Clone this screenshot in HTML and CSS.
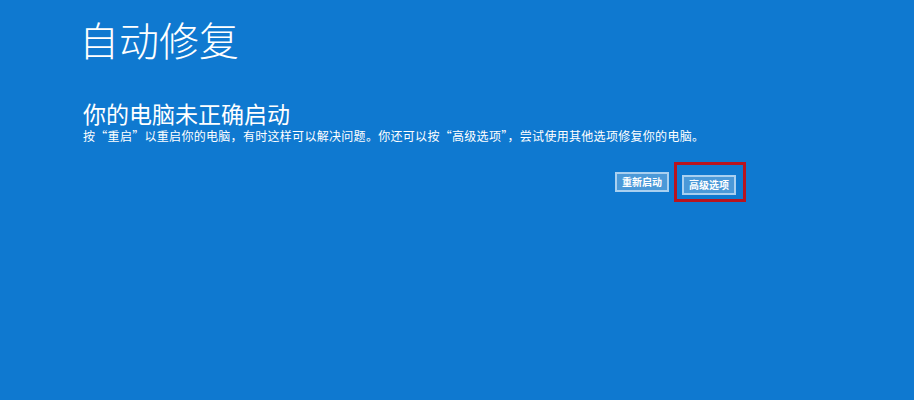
FILE: index.html
```html
<!DOCTYPE html>
<html lang="zh-CN">
<head>
<meta charset="utf-8">
<link rel="stylesheet" href="styles.css">
</head>
<body>
<div class="screen">
  <h1 class="title">自动修复</h1>
  <h2 class="subtitle">你的电脑未正确启动</h2>
  <p class="desc">按“重启”以重启你的电脑，有时这样可以解决问题。你还可以按“高级选项”，尝试使用其他选项修复你的电脑。</p>
  <div class="actions">
    <button class="btn">重新启动</button>
    <div class="highlight"><button class="btn">高级选项</button></div>
  </div>
</div>
</body>
</html>
```
FILE: styles.css
```css
html, body {
  margin: 0;
  padding: 0;
  width: 914px;
  height: 400px;
  overflow: hidden;
  background: #0f79d0;
}
.screen {
  box-sizing: border-box;
  width: 914px;
  height: 400px;
  padding: 13px 0 0 83px;
  font-family: "Noto Sans CJK SC", "Noto Sans", sans-serif;
  color: #ffffff;
}
.title {
  margin: 0 0 0 -4px;
  font-size: 40px;
  font-weight: 300;
  line-height: 52px;
}
.subtitle {
  margin: 34px 0 0 0;
  font-size: 23px;
  font-weight: 400;
  line-height: 28px;
}
.desc {
  margin: 0;
  font-size: 12px;
  letter-spacing: 0.3px;
  line-height: 17px;
}
.actions {
  display: flex;
  align-items: center;
  gap: 5px;
  margin: 18px 0 0 532px;
}
.btn {
  box-sizing: border-box;
  width: 54px;
  height: 20px;
  padding: 0;
  border: 2px solid #a9d0f0;
  background: #4b99d8;
  color: #ffffff;
  font-family: "Noto Sans CJK SC", sans-serif;
  font-size: 10px;
  font-weight: 700;
  line-height: 16px;
  text-align: center;
}
.highlight {
  padding: 5px 7px 4px 5px;
  border: 3px solid #b8141f;
}
```
